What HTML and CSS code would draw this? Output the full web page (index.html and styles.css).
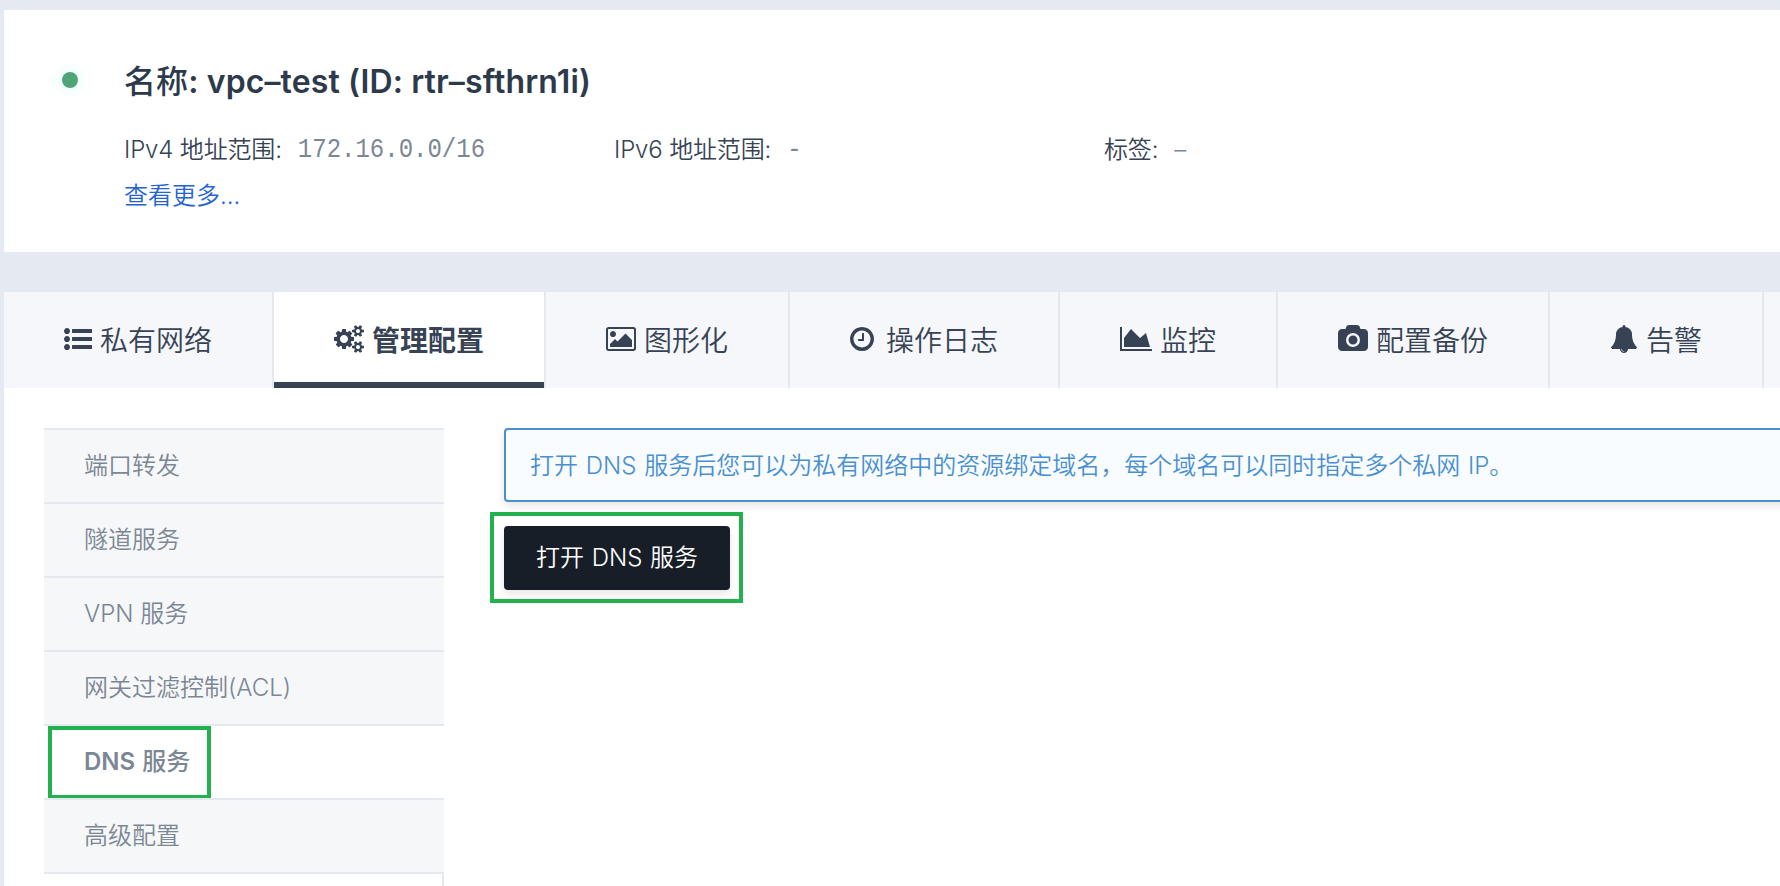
FILE: index.html
```html
<!DOCTYPE html>
<html lang="zh-CN">
<head>
<meta charset="utf-8">
<title>vpc-test</title>
<link rel="stylesheet" href="styles.css">
</head>
<body>
<div class="page">
  <section class="summary">
    <span class="status"></span>
    <div class="summary-body">
      <h1 class="title">名称: vpc–test (ID: rtr–sfthrn1i)</h1>
      <div class="facts">
        <div class="fact"><span class="fact-label">IPv4 地址范围:</span><span class="fact-value mono">172.16.0.0/16</span></div>
        <div class="fact"><span class="fact-label">IPv6 地址范围:</span><span class="fact-value mono">-</span></div>
        <div class="fact"><span class="fact-label">标签:</span><span class="fact-value">–</span></div>
      </div>
      <a class="more">查看更多...</a>
    </div>
  </section>

  <nav class="tabs">
    <a class="tab"><svg class="icon" width="28" height="28" viewBox="0 0 1792 1792"><path d="M384 1408q0 80-56 136t-136 56-136-56-56-136 56-136 136-56 136 56 56 136zm0-512q0 80-56 136t-136 56-136-56-56-136 56-136 136-56 136 56 56 136zm1408 416v192q0 13-9.500 22.500t-22.500 9.500h-1216q-13 0-22.500-9.500t-9.500-22.500v-192q0-13 9.500-22.500t22.500-9.500h1216q13 0 22.500 9.500t9.500 22.500zm-1408-928q0 80-56 136t-136 56-136-56-56-136 56-136 136-56 136 56 56 136zm1408 416v192q0 13-9.500 22.500t-22.500 9.500h-1216q-13 0-22.500-9.500t-9.500-22.500v-192q0-13 9.500-22.500t22.500-9.500h1216q13 0 22.500 9.500t9.500 22.500zm0-512v192q0 13-9.500 22.500t-22.500 9.500h-1216q-13 0-22.500-9.500t-9.500-22.500v-192q0-13 9.500-22.500t22.500-9.500h1216q13 0 22.500 9.500t9.500 22.500z"/></svg><span>私有网络</span></a>
    <a class="tab tab-active"><svg class="icon" width="30" height="28" viewBox="0 0 1920 1792"><path d="M896 896q0-106-75-181t-181-75-181 75-75 181 75 181 181 75 181-75 75-181zm768 512q0-52-38-90t-90-38-90 38-38 90q0 53 37.500 90.500t90.500 37.500 90.500-37.500 37.500-90.500zm0-1024q0-52-38-90t-90-38-90 38-38 90q0 53 37.500 90.500t90.500 37.500 90.500-37.500 37.500-90.500zm-384 421v185q0 10-7 19.500t-16 10.500l-155 24q-11 35-32 76 34 48 90 115 7 11 7 20 0 12-7 19-23 30-82.500 89.500t-78.500 59.500q-11 0-21-7l-115-90q-37 19-77 31-11 108-23 155-7 24-30 24h-186q-11 0-20-7.500t-10-17.500l-23-153q-34-10-75-31l-118 89q-7 7-20 7-11 0-21-8-144-133-144-160 0-9 7-19 10-14 41-53t47-61q-23-44-35-82l-152-24q-10-1-17-9.500t-7-19.500v-185q0-10 7-19.500t16-10.500l155-24q11-35 32-76-34-48-90-115-7-11-7-20 0-12 7-20 22-30 82-89t79-59q11 0 21 7l115 90q34-18 77-32 11-108 23-154 7-24 30-24h186q11 0 20 7.500t10 17.500l23 153q34 10 75 31l118-89q8-7 20-7 11 0 21 8 144 133 144 160 0 8-7 19-12 16-42 54t-45 60q23 48 34 82l152 23q10 2 17 10.500t7 19.500zm640 533v140q0 16-149 31-12 27-30 52 51 113 51 138 0 4-4 7-122 71-124 71-8 0-46-47t-52-68q-20 2-30 2t-30-2q-14 21-52 68t-46 47q-2 0-124-71-4-3-4-7 0-25 51-138-18-25-30-52-149-15-149-31v-140q0-16 149-31 13-29 30-52-51-113-51-138 0-4 4-7 4-2 35-20t59-34 30-16q8 0 46 46.500t52 67.500q20-2 30-2t30 2q51-71 92-112l6-2q4 0 124 70 4 3 4 7 0 25-51 138 17 23 30 52 149 15 149 31zm0-1024v140q0 16-149 31-12 27-30 52 51 113 51 138 0 4-4 7-122 71-124 71-8 0-46-47t-52-68q-20 2-30 2t-30-2q-14 21-52 68t-46 47q-2 0-124-71-4-3-4-7 0-25 51-138-18-25-30-52-149-15-149-31v-140q0-16 149-31 13-29 30-52-51-113-51-138 0-4 4-7 4-2 35-20t59-34 30-16q8 0 46 46.500t52 67.500q20-2 30-2t30 2q51-71 92-112l6-2q4 0 124 70 4 3 4 7 0 25-51 138 17 23 30 52 149 15 149 31z"/></svg><span>管理配置</span></a>
    <a class="tab"><svg class="icon" width="30" height="28" viewBox="64 0 1920 1792"><path d="M704 576q0 80-56 136t-136 56-136-56-56-136 56-136 136-56 136 56 56 136zm1024 384v448h-1408v-192l320-320 160 160 512-512zm96-704h-1600q-13 0-22.500 9.500t-9.500 22.500v1216q0 13 9.500 22.500t22.500 9.500h1600q13 0 22.500-9.500t9.500-22.500v-1216q0-13-9.500-22.500t-22.500-9.500zm160 32v1216q0 66-47 113t-113 47h-1600q-66 0-113-47t-47-113v-1216q0-66 47-113t113-47h1600q66 0 113 47t47 113z"/></svg><span>图形化</span></a>
    <a class="tab tab-wide-gap"><svg class="icon" width="24" height="28" viewBox="128 0 1536 1792"><path d="M1024 544v448q0 14-9 23t-23 9h-320q-14 0-23-9t-9-23v-64q0-14 9-23t23-9h224v-352q0-14 9-23t23-9h64q14 0 23 9t9 23zm416 352q0-148-73-273t-198-198-273-73-273 73-198 198-73 273 73 273 198 198 273 73 273-73 198-198 73-273zm224 0q0 209-103 385.500t-279.500 279.500-385.500 103-385.500-103-279.500-279.500-103-385.500 103-385.500 279.500-279.500 385.500-103 385.500 103 279.500 279.500 103 385.500z"/></svg><span>操作日志</span></a>
    <a class="tab"><svg class="icon" width="32" height="28" viewBox="0 0 2048 1792"><path d="M2048 1536v128h-2048v-1536h128v1408h1920zm-384-1024l256 896h-1664v-576l448-576 576 576z"/></svg><span>监控</span></a>
    <a class="tab"><svg class="icon" width="30" height="28" viewBox="0 0 1920 1792"><path d="M960 672q119 0 203.500 84.500t84.500 203.500-84.500 203.500-203.500 84.500-203.500-84.500-84.500-203.500 84.500-203.500 203.500-84.500zm704-416q106 0 181 75t75 181v896q0 106-75 181t-181 75h-1408q-106 0-181-75t-75-181v-896q0-106 75-181t181-75h224l51-136q19-49 69.500-84.500t103.500-35.500h512q53 0 103.500 35.500t69.500 84.500l51 136h224zm-704 1152q185 0 316.500-131.500t131.500-316.500-131.500-316.500-316.500-131.500-316.500 131.500-131.500 316.500 131.500 316.500 316.500 131.500z"/></svg><span>配置备份</span></a>
    <a class="tab"><svg class="icon" width="28" height="28" viewBox="0 0 1792 1792"><path d="M912 1696q0-16-16-16-59 0-101.500-42.500t-42.500-101.500q0-16-16-16t-16 16q0 73 51.500 124.500t124.500 51.500q16 0 16-16zm816-288q0 52-38 90t-90 38h-448q0 106-75 181t-181 75-181-75-75-181h-448q-52 0-90-38t-38-90q50-42 91-88t85-119.500 74.500-158.500 50-206 19.500-260q0-152 117-282.500t307-158.500q-8-19-8-39 0-40 28-68t68-28 68 28 28 68q0 20-8 39 190 28 307 158.500t117 282.500q0 139 19.500 260t50 206 74.500 158.500 85 119.500 91 88z"/></svg><span>告警</span></a>
  </nav>

  <main class="panel">
    <aside class="side">
      <a class="side-item">端口转发</a>
      <a class="side-item">隧道服务</a>
      <a class="side-item">VPN 服务</a>
      <a class="side-item">网关过滤控制(ACL)</a>
      <a class="side-item side-current">DNS 服务<span class="mark mark-side"></span></a>
      <a class="side-item">高级配置</a>
      <div class="side-rest"></div>
    </aside>
    <div class="content">
      <div class="notice"><span class="notice-text">打开 DNS 服务后您可以为私有网络中的资源绑定域名，每个域名可以同时指定多个私网 IP。</span></div>
      <button class="primary">打开 DNS 服务<span class="mark mark-button"></span></button>
    </div>
  </main>
</div>
</body>
</html>
```
FILE: styles.css
```css
* { box-sizing: border-box; }

body {
  margin: 0;
  height: 886px;
  overflow: hidden;
  background: #e4e9f2;
  color: #374355;
  font-family: Inter, "Noto Sans CJK SC", sans-serif;
  font-size: 24px;
}

.page {
  display: flex;
  flex-direction: column;
  height: 886px;
  padding: 10px 0 0 4px;
}

.summary {
  display: flex;
  height: 242px;
  flex: none;
  padding: 50px 0 0 58px;
  background: #fff;
}

.status {
  width: 16px;
  height: 16px;
  margin: 12px 46px 0 0;
  border-radius: 50%;
  background: #4fa57a;
  box-shadow: 0 0 0 8px #f5fffb;
}

.summary-body { flex: 1; }

.title {
  margin: 0;
  font-size: 32px;
  line-height: 44px;
  font-weight: 560;
  letter-spacing: .12px;
  color: #2d3a4b;
  white-space: nowrap;
}

.facts {
  display: grid;
  grid-template-columns: 490px 490px 1fr;
  margin-top: 23px;
}

.fact {
  display: flex;
  gap: 16px;
  line-height: 46px;
  font-weight: 350;
  white-space: nowrap;
}

.fact-label { letter-spacing: -.15px; }

.fact-value { color: #7b8794; }

.mono {
  font-family: "Liberation Mono", monospace;
  transform: scaleY(1.12);
}

.more {
  display: block;
  line-height: 46px;
  font-weight: 350;
  color: #2563d0;
}

.tabs {
  display: flex;
  flex: none;
  height: 96px;
  margin-top: 40px;
  background: #f5f7fb;
}

.tab {
  display: flex;
  flex: none;
  align-items: center;
  gap: 8px;
  padding: 0 60px;
  border-right: 2px solid #e4e9f0;
  box-sizing: content-box;
  font-size: 28px;
  line-height: 42px;
  font-weight: 350;
}

.tab span { padding-top: 1px; }

.tab-wide-gap { gap: 12px; }

.tab-active {
  background: linear-gradient(#374355, #374355) left bottom / 100% 6px no-repeat #fff;
  background-clip: padding-box;
  border-right-color: #e4e9f0;
  font-weight: 700;
}

.icon {
  flex: none;
  margin-bottom: 2px;
  fill: #374355;
}

.panel {
  display: flex;
  flex: 1;
  gap: 60px;
  padding: 40px 0 0 40px;
  background: #fff;
}

.side {
  display: flex;
  flex: none;
  flex-direction: column;
  width: 400px;
}

.side-item {
  position: relative;
  flex: none;
  height: 74px;
  padding-left: 40px;
  border-top: 2px solid #e4e9f0;
  background: #f5f7f9;
  line-height: 72px;
  font-weight: 350;
  color: #7b8794;
}

.side-current {
  background: #fff;
  font-weight: 560;
  word-spacing: 1px;
}

.side-rest {
  flex: 1;
  border: solid #e4e9f0;
  border-width: 2px 2px 0 0;
}

.content { flex: 1; }

.notice {
  width: 1300px;
  height: 74px;
  padding-left: 24px;
  border: 2px solid #4a90cf;
  border-radius: 4px;
  background: #f8fcff;
  box-shadow: 0 4px 8px rgba(0, 0, 0, .1);
  line-height: 72px;
  font-weight: 350;
  color: #4a90cf;
  word-spacing: 1px;
  white-space: nowrap;
}

.primary {
  position: relative;
  display: block;
  width: 226px;
  height: 64px;
  margin-top: 24px;
  padding: 0;
  border: 0;
  border-radius: 4px;
  background: #171e28;
  box-shadow: 0 4px 8px rgba(0, 0, 0, .1);
  color: #fff;
  font: 350 24px/64px Inter, "Noto Sans CJK SC", sans-serif;
  word-spacing: 1px;
  white-space: nowrap;
}

/* Highlight frames laid over the controls */
.mark {
  position: absolute;
  border: 4px solid #22b14c;
}

.mark-side {
  top: 0;
  left: 4px;
  width: 163px;
  height: 73px;
}

.mark-button {
  top: -14px;
  left: -14px;
  width: 253px;
  height: 91px;
}
```
